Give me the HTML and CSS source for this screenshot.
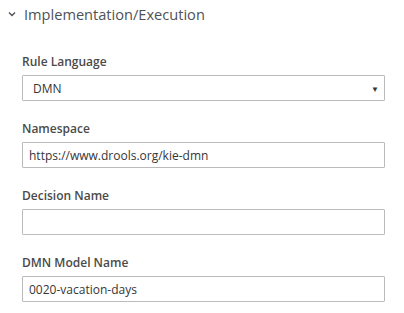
FILE: index.html
```html
<!DOCTYPE html>
<html>
<head>
    <title>Implementation/Execution</title>
    <link rel="stylesheet" href="styles.css">
</head>
<body>
    <div class="section-title">
        <svg class="chevron" width="8" height="6" viewBox="0 0 8 6"><polyline points="1,1.5 4,4.5 7,1.5" fill="none" stroke="#4d5258" stroke-width="1.4"/></svg>
        <span>Implementation/Execution</span>
    </div>

    <form class="form">
        <div class="form-group">
            <label>Rule Language</label>
            <div class="select-wrap">
                <select class="form-control">
                    <option>DMN</option>
                    <option>DRL</option>
                </select>
                <span class="caret">&#9660;</span>
            </div>
        </div>
        <div class="form-group">
            <label>Namespace</label>
            <input class="form-control" type="text" value="https://www.drools.org/kie-dmn">
        </div>
        <div class="form-group">
            <label>Decision Name</label>
            <input class="form-control" type="text" value="">
        </div>
        <div class="form-group">
            <label>DMN Model Name</label>
            <input class="form-control" type="text" value="0020-vacation-days">
        </div>
    </form>
</body>
</html>
```

FILE: styles.css
```css
* {
    box-sizing: border-box;
    margin: 0;
    padding: 0;
}

body {
    font-family: 'Open Sans', 'Liberation Sans', sans-serif;
    background-color: #ffffff;
    color: #363636;
}

.section-title {
    display: flex;
    align-items: center;
    height: 27px;
    padding-left: 8px;
    font-size: 14.6px;
    font-weight: 500;
    color: #4d5258;
}

.chevron {
    margin-right: 8px;
}

.form {
    padding: 26px 19px 0 22px;
}

.form-group {
    margin-bottom: 19px;
}

.form-group label {
    display: block;
    font-size: 12px;
    font-weight: 600;
    line-height: 18px;
    margin-bottom: 4px;
    color: #4a4a4a;
}

.form-control {
    display: block;
    width: 100%;
    height: 26px;
    padding: 0 6px;
    border: 1px solid #bbbbbb;
    border-radius: 1px;
    background-color: #ffffff;
    font-family: inherit;
    font-size: 12px;
    color: #363636;
    outline: none;
}

.select-wrap {
    position: relative;
}

select.form-control {
    appearance: none;
    padding-left: 10px;
}

.caret {
    position: absolute;
    right: 6px;
    top: 8px;
    font-size: 8px;
    color: #363636;
    pointer-events: none;
}
```
